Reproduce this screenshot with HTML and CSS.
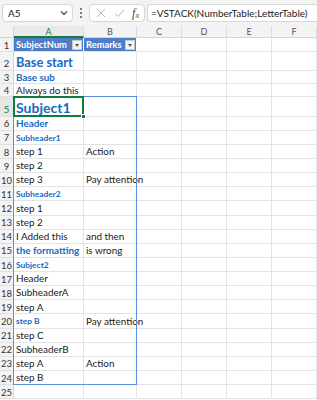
FILE: index.html
```html
<!DOCTYPE html>
<html>
<head>
<meta charset="utf-8">
<link rel="stylesheet" href="styles.css">
</head>
<body>
<div class="app">
  <div class="topbar">
    <div class="namebox"><span>A5</span>
      <svg class="chev" width="8" height="6" viewBox="0 0 8 6"><path d="M1 1.5 L4 4.5 L7 1.5" fill="none" stroke="#444" stroke-width="1.1"/></svg>
    </div>
    <div class="dots"><i></i><i></i><i></i></div>
    <div class="fxbox">
      <svg width="10" height="10" viewBox="0 0 10 10"><path d="M1 1 L9 9 M9 1 L1 9" stroke="#b8b8b8" stroke-width="1"/></svg>
      <svg width="11" height="10" viewBox="0 0 11 10"><path d="M1 5.5 L4 8.5 L10 1.5" fill="none" stroke="#b8b8b8" stroke-width="1"/></svg>
      <span class="fx">f<sub>x</sub></span>
    </div>
    <div class="formula">=VSTACK(NumberTable;LetterTable)</div>
  </div>

  <div class="sheet">
    <div class="corner"></div>
    <div class="colh sel">A</div>
    <div class="colh">B</div>
    <div class="colh">C</div>
    <div class="colh">D</div>
    <div class="colh">E</div>
    <div class="colh">F</div>

    <div class="rowh">1</div><div class="c th">SubjectNum<span class="dd"></span></div><div class="c th">Remarks<span class="dd"></span></div><div class="c"></div><div class="c"></div><div class="c"></div><div class="c"></div>
    <div class="rowh">2</div><div class="c h1">Base start</div><div class="c"></div><div class="c"></div><div class="c"></div><div class="c"></div><div class="c"></div>
    <div class="rowh">3</div><div class="c h2">Base sub</div><div class="c"></div><div class="c"></div><div class="c"></div><div class="c"></div><div class="c"></div>
    <div class="rowh">4</div><div class="c">Always do this</div><div class="c"></div><div class="c"></div><div class="c"></div><div class="c"></div><div class="c"></div>
    <div class="rowh rsel">5</div><div class="c h1 big">Subject1</div><div class="c"></div><div class="c"></div><div class="c"></div><div class="c"></div><div class="c"></div>
    <div class="rowh">6</div><div class="c h2">Header</div><div class="c"></div><div class="c"></div><div class="c"></div><div class="c"></div><div class="c"></div>
    <div class="rowh">7</div><div class="c h3">Subheader1</div><div class="c"></div><div class="c"></div><div class="c"></div><div class="c"></div><div class="c"></div>
    <div class="rowh">8</div><div class="c">step 1</div><div class="c">Action</div><div class="c"></div><div class="c"></div><div class="c"></div><div class="c"></div>
    <div class="rowh">9</div><div class="c">step 2</div><div class="c"></div><div class="c"></div><div class="c"></div><div class="c"></div><div class="c"></div>
    <div class="rowh">10</div><div class="c">step 3</div><div class="c over">Pay attention</div><div class="c"></div><div class="c"></div><div class="c"></div><div class="c"></div>
    <div class="rowh">11</div><div class="c h3">Subheader2</div><div class="c"></div><div class="c"></div><div class="c"></div><div class="c"></div><div class="c"></div>
    <div class="rowh">12</div><div class="c">step 1</div><div class="c"></div><div class="c"></div><div class="c"></div><div class="c"></div><div class="c"></div>
    <div class="rowh">13</div><div class="c">step 2</div><div class="c"></div><div class="c"></div><div class="c"></div><div class="c"></div><div class="c"></div>
    <div class="rowh">14</div><div class="c">I Added this</div><div class="c">and then</div><div class="c"></div><div class="c"></div><div class="c"></div><div class="c"></div>
    <div class="rowh">15</div><div class="c h2">the formatting</div><div class="c">is wrong</div><div class="c"></div><div class="c"></div><div class="c"></div><div class="c"></div>
    <div class="rowh">16</div><div class="c h3">Subject2</div><div class="c"></div><div class="c"></div><div class="c"></div><div class="c"></div><div class="c"></div>
    <div class="rowh">17</div><div class="c">Header</div><div class="c"></div><div class="c"></div><div class="c"></div><div class="c"></div><div class="c"></div>
    <div class="rowh">18</div><div class="c">SubheaderA</div><div class="c"></div><div class="c"></div><div class="c"></div><div class="c"></div><div class="c"></div>
    <div class="rowh">19</div><div class="c">step A</div><div class="c"></div><div class="c"></div><div class="c"></div><div class="c"></div><div class="c"></div>
    <div class="rowh">20</div><div class="c h3">step B</div><div class="c over">Pay attention</div><div class="c"></div><div class="c"></div><div class="c"></div><div class="c"></div>
    <div class="rowh">21</div><div class="c">step C</div><div class="c"></div><div class="c"></div><div class="c"></div><div class="c"></div><div class="c"></div>
    <div class="rowh">22</div><div class="c">SubheaderB</div><div class="c"></div><div class="c"></div><div class="c"></div><div class="c"></div><div class="c"></div>
    <div class="rowh">23</div><div class="c">step A</div><div class="c">Action</div><div class="c"></div><div class="c"></div><div class="c"></div><div class="c"></div>
    <div class="rowh">24</div><div class="c">step B</div><div class="c"></div><div class="c"></div><div class="c"></div><div class="c"></div><div class="c"></div>
    <div class="rowh">25</div><div class="c"></div><div class="c"></div><div class="c"></div><div class="c"></div><div class="c"></div><div class="c"></div>

    <div class="spill"></div>
    <div class="active"><span class="handle"></span></div>
  </div>
</div>
</body>
</html>
```

FILE: styles.css
```css
* { box-sizing: border-box; }
html, body { margin: 0; padding: 0; }
body {
  width: 317px;
  height: 400px;
  overflow: hidden;
  background: #ffffff;
  font-family: Lato, "Liberation Sans", sans-serif;
  color: #1a1a1a;
}
.app { width: 317px; }

.topbar {
  height: 26px;
  background: #f3f3f3;
  display: flex;
  align-items: center;
  padding: 0 0 0 2px;
}
.namebox {
  width: 71px;
  height: 18px;
  background: #fff;
  border: 1px solid #d6d6d6;
  border-radius: 4px;
  display: flex;
  align-items: center;
  justify-content: space-between;
  padding: 0 4px 0 5px;
  font-size: 10px;
  color: #222;
}
.dots {
  width: 16px;
  display: flex;
  flex-direction: column;
  align-items: center;
  gap: 2px;
}
.dots i { width: 2px; height: 2px; background: #555; border-radius: 1px; display: block; }
.fxbox {
  width: 56px;
  height: 18px;
  background: #fff;
  border: 1px solid #d6d6d6;
  border-radius: 4px;
  display: flex;
  align-items: center;
  justify-content: space-between;
  padding: 0 5px 0 6px;
}
.fx {
  font-family: "Liberation Serif", serif;
  font-style: italic;
  font-size: 12px;
  color: #444;
  line-height: 1;
}
.fx sub { font-size: 8px; vertical-align: -1px; }
.formula {
  flex: 1;
  margin-left: 2px;
  height: 18px;
  background: #fff;
  border: 1px solid #d6d6d6;
  border-right: none;
  border-radius: 4px 0 0 4px;
  display: flex;
  align-items: center;
  padding-left: 3px;
  font-size: 10px;
  color: #222;
  white-space: nowrap;
}

.sheet {
  position: relative;
  display: grid;
  grid-template-columns: 14px 70px 53px 45px 45px 45px 45px;
  grid-template-rows: 12px 14.3px 18.4px 13.8px 13px 19.2px repeat(20, 14.13px);
  font-size: 9.9px;
}
.corner {
  background: #f3f3f3;
  border-right: 1px solid #d4d4d4;
  border-bottom: 1px solid #d4d4d4;
}
.colh {
  background: #f3f3f3;
  border-right: 1px solid #dcdcdc;
  border-bottom: 1px solid #d4d4d4;
  font-size: 9px;
  color: #555;
  display: flex;
  align-items: center;
  justify-content: center;
}
.colh.sel {
  color: #107c41;
  border-bottom: 2px solid #107c41;
  background: #e9e9e9;
}
.rowh {
  background: #f3f3f3;
  border-right: 1px solid #d4d4d4;
  border-bottom: 1px solid #e0e0e0;
  font-size: 9.5px;
  color: #333;
  display: flex;
  align-items: flex-end;
  justify-content: center;
  padding-bottom: 1px;
  line-height: 1;
}
.rowh.rsel { color: #107c41; background: #e6e6e6; }

.c {
  border-right: 1px solid #e3e3e3;
  border-bottom: 1px solid #e3e3e3;
  display: flex;
  align-items: flex-end;
  padding: 0 2px 1px 2px;
  white-space: nowrap;
  line-height: 1;
  min-width: 0;
}
.c.over { overflow: visible; position: relative; z-index: 1; }
.th {
  background: #4f7cc4;
  color: #fff;
  font-weight: bold;
  font-size: 9.3px;
  border-right: 1px solid #ffffff;
  justify-content: space-between;
  padding-right: 1px;
  align-items: center;
  padding-bottom: 0;
}
.dd {
  flex: none;
  width: 10px;
  height: 10px;
  background: #f4f4f4;
  border: 1px solid #c8c8c8;
  position: relative;
}
.dd::after {
  content: "";
  position: absolute;
  left: 2px;
  top: 3px;
  border-left: 2px solid transparent;
  border-right: 2px solid transparent;
  border-top: 3px solid #555;
}
.h1 { color: #1769c4; font-weight: bold; font-size: 12.8px; }
.h1.big { font-size: 14px; }
.h2 { color: #1769c4; font-weight: bold; font-size: 9.9px; }
.h3 { color: #1769c4; font-weight: bold; font-size: 8.4px; padding-bottom: 2px; }

.spill {
  position: absolute;
  inset: 0;
  grid-column: 2 / 4;
  grid-row: 6 / 26;
  border: 1px solid #5b8ee0;
  margin: -1px 0 0 -1px;
  z-index: 2;
  pointer-events: none;
}
.active {
  position: absolute;
  inset: 0;
  grid-column: 2 / 3;
  grid-row: 6 / 7;
  border: 2px solid #107c41;
  margin: -1px 0 0 -1px;
  z-index: 3;
}
.handle {
  position: absolute;
  right: -4px;
  bottom: -4px;
  width: 5px;
  height: 5px;
  background: #107c41;
  border: 1px solid #fff;
}
```
